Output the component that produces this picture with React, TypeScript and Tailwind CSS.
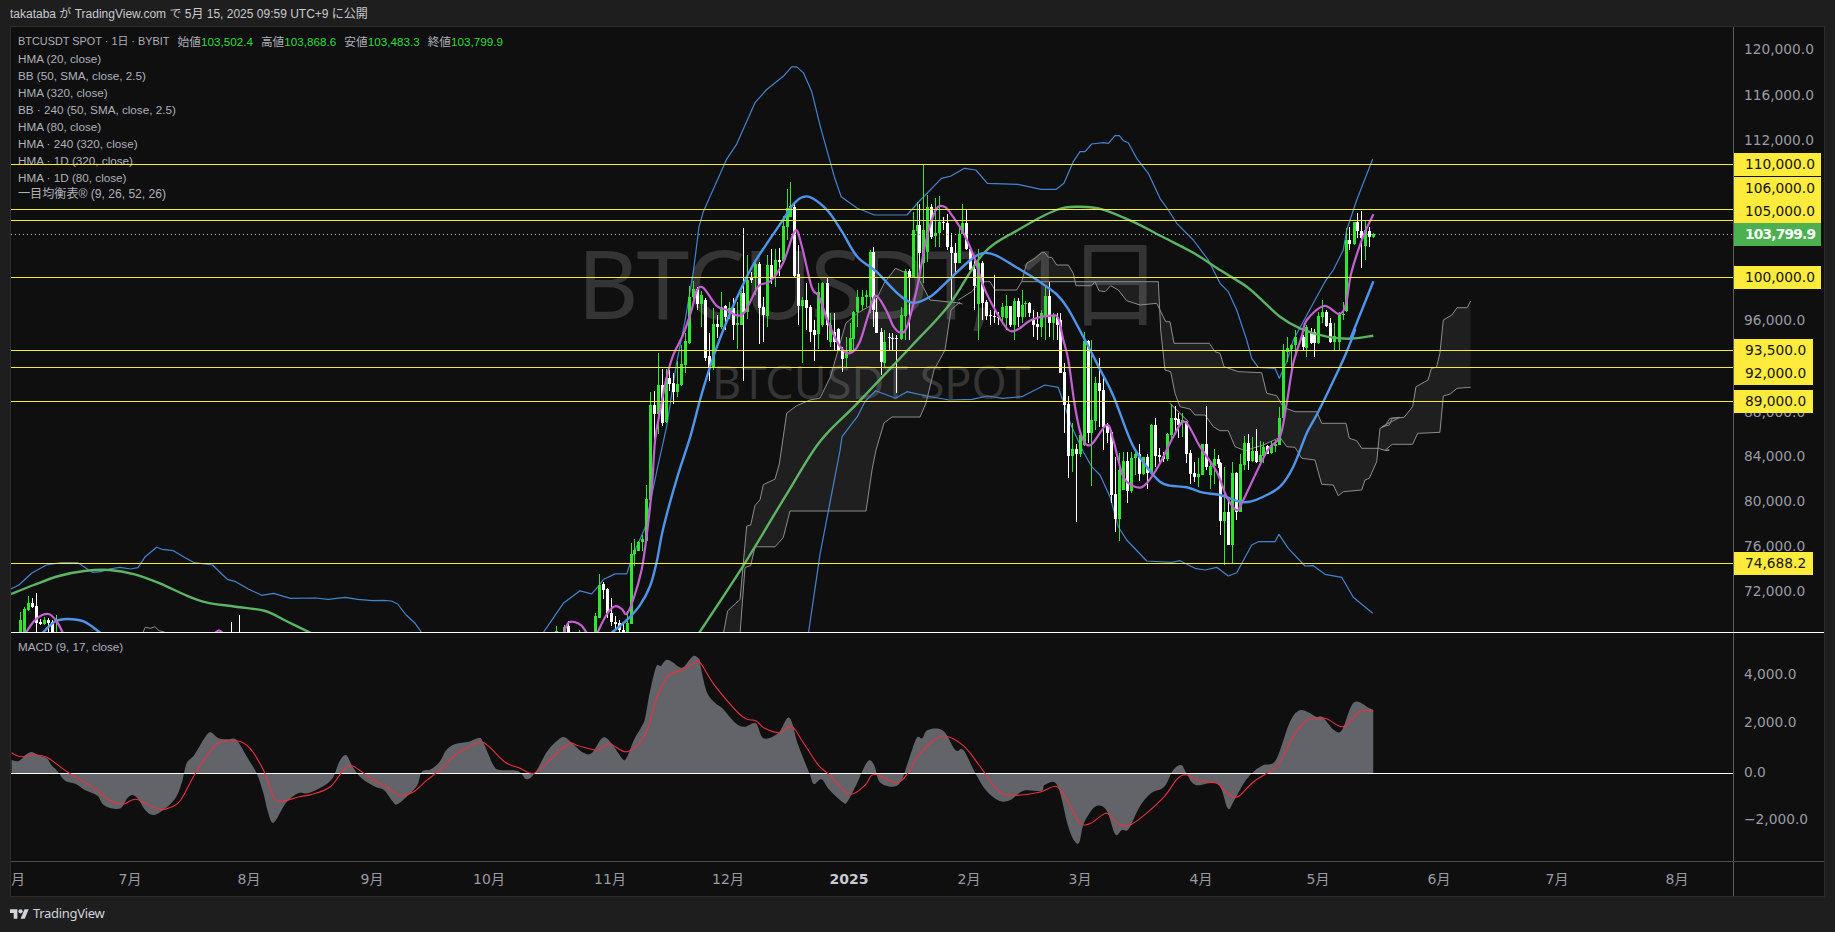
import React from 'react';

type Z = [number, number, number, number];
const Z2: Z = [1300, 2.93, 120, 3];
const Z3: Z = [1300, 2.93, 430, 3];
const Z5: Z = [620, 2.613, 150, 3];
const Z6: Z = [1000, 3, 330, 3];
const Z7: Z = [0, 2.376, 520, 3];
const Z8: Z = [0, 2.24, 630, 3];
const Z9: Z = [700, 2.24, 630, 3];
const Z10: Z = [500, 3, 50, 2.657];
const Z11: Z = [900, 3, 110, 3];

type P = [number, number];
const pts = (z: Z, a: number[]): P[] => {
  const out: P[] = [];
  for (let i = 0; i < a.length; i += 2) out.push([z[0] + a[i] / z[1], z[2] + a[i + 1] / z[3]]);
  return out;
};
const poly = (p: P[]) => p.map((q) => q[0].toFixed(1) + ',' + q[1].toFixed(1)).join(' ');
const smooth = (p: P[]) => {
  let d = `M${p[0][0].toFixed(1)} ${p[0][1].toFixed(1)}`;
  for (let i = 0; i < p.length - 1; i++) {
    const a = p[Math.max(0, i - 1)], b = p[i], c = p[i + 1], e = p[Math.min(p.length - 1, i + 2)];
    const c1x = b[0] + (c[0] - a[0]) / 6, c1y = b[1] + (c[1] - a[1]) / 6;
    const c2x = c[0] - (e[0] - b[0]) / 6, c2y = c[1] - (e[1] - b[1]) / 6;
    d += `C${c1x.toFixed(1)} ${c1y.toFixed(1)} ${c2x.toFixed(1)} ${c2y.toFixed(1)} ${c[0].toFixed(1)} ${c[1].toFixed(1)}`;
  }
  return d;
};

// Bollinger bands
const bandUpperLeft = pts(Z7, [26,207,45,195,75,160,110,135,145,128,185,128,205,145,220,157,240,155,260,147,285,142,310,147,328,143,345,110,372,82,385,88,412,92,440,113,462,128,505,135,525,160,540,178,560,185,590,207,622,226,650,220,690,235,750,234,780,238,820,232,850,238,885,242,910,241,930,243,945,252,965,285,985,308,1003,340]);
const bandUpper = [
  ...pts(Z10, [127,1552,190,1470,240,1437,275,1445,298,1422,310,1407,345,1392,380,1392,400,1340,435,1270,470,1120,500,1000,530,830,555,720,580,590,597,470,610,430,680,290,710,250,765,140,800,105,850,70,875,45,890,45,910,60,935,110,960,200]),
  ...pts(Z5, [560,80,578,140,620,175,665,195,750,195,785,150,840,85,865,78,900,55,930,60,960,100,1040,103,1100,118,1140,118,1160,100]),
  ...pts(Z11, [520,155,540,125,555,125,575,102,610,98,625,100,645,77,658,77,670,92,685,98,710,145,745,190,780,265,805,300,830,340,880,390,925,450,960,520,985,545,1010,600,1040,690]),
  ...pts(Z6, [755,85,775,112,825,115,838,145,860,95]),
  ...pts(Z11, [1180,690,1245,570,1275,515,1300,480,1330,420,1340,360,1370,270,1418,147]),
];
const bandLower = [
  ...pts(Z10, [925,1552,960,1340]),
  ...pts(Z5, [575,900,580,860,620,800,640,755,668,722,720,745,750,725,800,738,860,750,920,748,960,738,1000,745,1050,740,1110,705,1145,712]),
  ...pts(Z6, [190,215,215,290,250,365,275,410,300,435,330,500,355,590,380,630,440,693,515,697,540,692,585,715,615,720,650,712,685,738,710,728,755,645,775,635,825,635,837,613,865,655,915,708,940,707,975,733,1025,742,1060,802,1118,850]),
];
// HMA lines
const blueLeft = pts(Z7, [100,340,130,305,160,297,200,305,240,340]);
const blue = [
  ...pts(Z10, [330,1552,380,1515,420,1475,450,1425,470,1360,490,1270,530,1140,570,1030,600,930,620,870,650,790,690,700,720,640,760,570,800,515,850,450,880,410,910,390,940,395]),
  ...pts(Z5, [545,185,580,245,620,320,670,365,725,430,765,458,810,440,850,400,910,335,945,310,980,315,1040,355,1090,390,1140,432,1170,475,1215,570,1255,660,1290,740]),
  ...pts(Z6, [395,340,440,410,480,455,510,467,560,472,610,488,660,495,720,515,750,515,790,500,840,470,880,410,920,310,955,245,1020,110,1040,65,1065,0]),
  ...pts(Z2, [150,650,215,484]),
];
const magSmall1 = pts(Z7, [60,340,85,298,115,282,135,305,150,340]);
const magSmall2 = pts(Z7, [510,340,520,331,530,340]);
const magSmall3 = pts(Z10, [190,1552,205,1522,225,1520,245,1530,262,1552]);
const magenta = [
  ...pts(Z10, [290,1552,320,1500,345,1478,365,1485,380,1498,400,1460,425,1380,440,1290,455,1170,465,1040,480,960,500,870,520,810,550,755,575,690,590,640,610,632,650,680,680,690,710,705,735,695,775,628,810,615,850,565,885,480,905,520,935,630]),
  ...pts(Z5, [520,440,545,520,575,590,600,610,625,580,650,490,668,437,695,480,715,530,733,548,750,530,775,420,800,270,825,180,848,170,870,200,900,255,925,320,950,410,985,490,1015,540,1040,538,1075,510,1125,497,1145,505]),
  ...pts(Z6, [190,30,205,90,225,230,245,320,272,345,320,285,340,330,370,440,410,472,440,460,480,400,520,320,555,275,600,350,650,425,680,500,710,540,730,510,800,365,840,320,860,220,880,100,905,20]),
  ...pts(Z2, [20,600,70,558,115,582,135,550,150,460,185,350,215,283]),
];
const greenLeft = pts(Z7, [26,222,80,195,140,168,200,153,260,150,320,163,380,190,440,225,490,247,560,260,630,273,680,303,740,340]);
const green = [
  ...pts(Z10, [595,1552,730,1370,860,1180,960,1040]),
  ...pts(Z5, [620,760,760,590,860,465,950,310,1040,240,1140,180,1200,170,1260,178,1340,215,1420,262,1500,310,1568,360]),
  ...pts(Z11, [1040,530,1080,565,1140,620,1200,655,1280,680,1350,686,1420,677]),
];
// Ichimoku cloud
const c1Up = [
  ...pts(Z10, [670,1552,683,1490,720,1460,740,1265,752,1262,765,1210,780,1195,790,1155,825,1140,838,1100,860,965,890,945,930,930,960,925]),
  ...pts(Z5, [550,680,590,520,620,490,665,460,690,400,720,355,780,385,810,450,880,458,895,462]),
];
const c1Lo: P[] = [
  ...pts(Z10, [720,1552,735,1375,752,1370,765,1320,825,1320,850,1295,870,1225,960,1225]),
  [866, 511], [872, 470], [876, 450], [884, 423], [892, 417], [920, 417], [926, 403], [934, 370], [945, 350], [951, 310], [960, 302],
];
const c1Tail = pts(Z11, [175,570,215,545,240,515,270,515,285,540,350,540,365,515]);
const cP = [
  ...pts(Z11, [365,515,775,515]),
  ...pts(Z6, [482,0,495,120,512,125,525,190,540,230,570,237,585,255,615,255,640,290,660,302,685,302,705,350,735,362,790,345,840,322,860,350,885,352,905,385,945,390,965,463,1000,465,1015,497,1030,485,1085,480,1095,450,1108,445,1130,395,1140,295,1155,288,1170,265,1200,262]),
  ...pts(Z2, [240,920,262,915,270,895,305,892,330,860,340,800,375,780,385,745,400,742,410,700,420,600,445,585,460,563,490,563,500,543]),
];
const cQ = [
  ...pts(Z11, [365,515,380,460,405,445,425,428,435,428,445,442,455,442,470,465,505,465,520,490,528,527,575,527,585,515,597,542,615,545,632,527,655,540,680,572,720,585,770,580,780,600,797,635,810,635]),
  ...pts(Z6, [522,40,628,40,645,65,660,70,672,110,715,125,785,128,800,190,830,197,850,232,885,245,950,245,965,280,1038,280,1048,325,1070,332,1085,355,1135,355,1158,362,1168,360]),
  ...pts(Z3, [250,60,270,43,330,43,345,10]),
  ...pts(Z2, [350,940,410,937,420,828,440,822,460,805,500,802]),
];
const trend = pts(Z6, [510,220,565,275]);
const stub = pts(Z7, [340,337,345,322,358,325,368,320,378,332,392,337]);

type C = [number, number, number, number, number, number];
const cands: { z: Z; d: C[] }[] = [
  { z: Z7, d: [[1,48,300,340,275,340],[1,57,268,340,262,340],[1,67,250,270,228,272],[0,77,250,262,235,265],[0,86,258,310,220,340],[0,96,306,312,298,316],[1,105,300,312,292,316],[0,115,300,310,295,340],[0,123,305,340,300,340],[1,132,335,340,285,340],[0,550,336,340,305,340],[0,569,336,340,285,340]] },
  { z: Z10, d: [
    [1,169,1545,1552,1530,1552],[1,192,1532,1552,1528,1552],[0,205,1530,1552,1518,1552],[1,238,1546,1552,1540,1552],
    [1,286,1505,1552,1495,1552],[1,298,1422,1508,1393,1510],[0,310,1420,1435,1413,1460],[0,322,1433,1495,1430,1510],[0,334,1495,1520,1455,1530],[0,344,1520,1525,1505,1540],[0,356,1522,1540,1515,1552],[0,368,1540,1552,1525,1552],[1,380,1522,1552,1490,1552],[1,392,1338,1525,1310,1525],[1,403,1328,1340,1298,1370],[1,415,1308,1330,1305,1332],[1,427,1300,1308,1288,1330],[1,439,1193,1305,1157,1310],[1,451,943,1195,910,1195],[0,463,943,967,905,1050],[1,473,890,967,805,1020],[0,485,890,990,848,1000],[1,497,872,988,848,990],[0,508,872,888,850,905],[0,520,885,908,858,940],[1,532,888,908,825,922],[1,544,835,890,785,893],[1,556,772,837,752,858],[1,568,655,778,628,782],[1,580,635,655,615,665],[0,592,635,675,630,690],[1,602,650,675,640,735],[0,614,665,818,660,825],[0,626,812,845,752,880],[1,638,728,845,685,850],[0,650,728,735,703,765],[1,662,682,735,643,740],[0,674,680,710,678,745],[1,686,685,700,670,715],[0,698,685,730,658,770],[1,710,725,730,670,795],[1,722,646,730,640,730],[0,730,646,695,473,880],[1,742,612,697,545,715],[0,754,605,612,590,620],[1,766,568,605,562,650],[0,778,568,685,563,780],[0,790,683,705,655,775],[1,802,570,707,545,735],[0,814,570,608,530,622],[1,826,558,600,530,630],[0,838,558,562,525,600],[1,850,468,560,440,565],[1,862,420,470,368,505],[1,871,415,445,352,445],[0,883,418,600,408,605],[0,895,595,680,518,730],[1,907,665,680,655,832],[0,919,665,685,618,745],[0,931,682,748,678,775],[0,943,745,757,718,825],[1,955,643,755,618,795]] },
  { z: Z5, d: [[1,529,398,525,395,530],[0,540,398,525,385,570],[1,550,525,575,490,590],[0,560,545,575,490,600],[0,570,538,600,535,600],[0,580,600,628,590,665],[1,590,600,625,560,650],[1,600,565,605,520,610],[1,610,485,568,482,600],[1,620,440,485,420,530],[1,632,440,465,420,480],[1,642,435,440,420,470],[1,652,305,440,300,490],[0,662,305,480,290,530],[0,670,485,548,445,548],[0,681,545,635,535,675],[1,691,575,640,540,650],[0,702,560,565,550,600],[0,712,563,566,550,600],[0,722,565,568,555,730],[1,733,495,568,470,570]] },
  { z: Z11, d: [[1,14,483,617,478,690],[0,26,483,500,478,690],[1,38,360,500,305,500],[1,50,345,362,275,500],[0,58,345,430,282,510],[1,70,360,460,165,520],[1,82,292,425,255,455],[0,94,292,380,282,388],[1,106,368,378,265,410],[1,118,335,368,258,410],[0,130,335,338,320,360],[0,142,340,412,312,420],[0,154,412,430,370,570],[0,166,430,458,400,490],[1,178,372,458,345,460],[1,187,340,372,282,372],[0,199,340,418,300,420],[0,211,418,480,410,490],[0,223,478,528,450,600],[1,235,460,582,418,690],[0,247,458,580,452,630],[0,259,575,618,570,630],[0,271,615,617,600,645],[0,283,618,620,495,640],[0,295,620,622,605,645],[1,307,590,620,580,640],[1,317,588,625,555,660],[0,329,588,645,590,650],[1,341,572,645,565,690],[0,353,572,620,565,650],[1,365,585,620,540,640],[1,376,580,583,572,620],[0,388,580,608,575,620],[0,400,630,645,600,680],[0,412,642,650,605,690],[1,424,610,650,600,680],[1,436,558,622,530,690],[0,446,558,638,515,680],[1,458,617,640,610,690],[0,470,620,645,610,690]] },
  { z: Z6, d: [[0,181,-30,130,-50,130],[0,193,125,225,100,310],[0,205,222,378,198,445],[1,217,357,378,280,425],[0,229,357,372,342,575],[1,241,315,372,310,380],[1,253,33,345,5,348],[0,265,32,310,30,340],[1,274,270,308,30,468],[1,286,158,272,140,300],[0,298,158,183,85,290],[0,310,180,292,135,360],[0,322,285,308,280,340],[0,334,305,495,300,520],[0,346,492,567,380,605],[1,358,420,567,370,632],[1,370,393,480,365,480],[0,382,393,483,365,518],[1,394,385,483,365,490],[1,404,372,385,358,435],[0,416,372,432,342,452],[1,428,380,432,380,435],[0,440,380,428,372,478],[1,452,285,428,282,430],[0,464,285,378,265,410],[0,476,375,382,355,395],[0,488,378,388,365,395],[1,500,312,388,308,392],[1,512,265,315,222,330],[0,524,265,270,228,305],[0,534,268,285,250,325],[1,546,270,275,250,320],[0,557,275,372,272,400],[0,569,368,432,360,462],[0,581,428,440,395,455],[1,593,432,440,385,472],[1,605,342,435,342,435],[0,617,342,410,228,420],[1,629,408,435,395,478],[1,641,388,408,358,462],[0,653,388,402,375,415],[0,661,400,572,395,615],[1,673,547,572,410,705],[0,685,545,645,510,645],[1,697,430,645,397,700],[0,709,428,545,425,570],[1,721,402,545,372,545],[1,733,340,405,318,420],[0,745,340,392,312,420],[1,757,362,392,322,395],[0,769,362,395,298,398],[1,781,375,395,332,398],[1,790,350,377,335,400],[0,802,348,372,345,372],[1,814,345,368,332,372],[1,826,342,347,330,365],[1,838,265,345,232,345],[1,850,62,265,42,265],[1,862,55,65,20,95],[1,874,45,57,42,122],[1,886,20,45,0,80]] },
  { z: Z2, d: [[0,10,650,682,645,690],[1,19,620,683,615,712],[0,31,640,668,625,672],[0,42,635,668,628,710],[1,54,588,670,575,672],[1,65,575,592,540,610],[0,77,575,618,570,620],[0,89,608,667,595,670],[1,101,648,665,610,690],[1,113,583,665,575,690],[1,125,582,585,545,600],[1,136,360,572,325,575],[0,145,360,372,320,390],[1,157,305,372,305,375],[0,168,305,332,280,355],[0,180,332,355,272,443],[1,191,330,378,302,420],[0,203,332,352,320,380],[1,215,342,352,340,354]] },
];

const macdTop = [
  ...pts(Z8, [26,390,42,393,60,372,72,366,85,375,105,385,115,405,130,425,140,445,150,455,170,462,190,480,218,497,230,522,245,533,270,535,285,505,297,495,310,508,325,540,345,555,375,530,395,500,408,455,418,400,435,375,460,320,472,307,490,325,510,328,530,330,555,385,575,430,590,490,600,545,613,578,640,520,668,490,690,490,720,472,745,445,760,395,775,375,790,410,810,445,840,470,860,480,880,515,890,523,915,495,935,465,945,425,965,418,985,395,1000,360,1020,342,1050,335,1072,324,1082,335,1105,405,1120,420,1160,423,1180,448,1200,425,1225,365,1250,330,1265,322,1290,350,1305,367,1325,370,1350,323,1370,340,1393,385,1403,385,1420,330,1435,295,1445,265,1455,190,1470,110,1480,108,1492,90,1505,95,1520,110,1532,110,1553,78,1568,90]),
  ...pts(Z9, [0,100,15,185,35,220,50,235,80,280,100,290,125,280,142,325,175,310,200,263,220,345,245,430,255,462,272,448,290,480,320,517,330,515,350,465,375,395,390,405,402,455,430,470,450,455,465,400,485,325,498,325,510,300,545,302,572,360,590,360,615,425,640,480,670,512,695,510,725,482,765,483,772,465,800,465,825,590,840,635,850,635,860,580,885,530,910,540,930,613,945,600,960,597,985,530,1010,490,1040,470,1060,420,1078,405,1090,430,1110,465,1160,462,1182,535,1195,515,1218,460,1240,425,1262,405,1290,390,1320,280,1340,243,1360,245,1380,260,1395,262,1420,300,1438,300,1465,217,1500,235,1508,240]),
];
const macdLine = [
  ...pts(Z8, [26,368,45,380,75,375,105,382,150,425,215,478,245,510,275,523,305,508,355,538,385,530,405,510,440,425,485,343,530,332,560,355,590,420,615,505,635,513,670,500,700,493,740,470,770,420,790,408,830,445,865,470,895,497,925,487,955,452,985,420,1020,375,1045,355,1082,337,1130,395,1165,415,1185,428,1205,423,1270,345,1295,347,1335,360,1365,342,1405,365,1445,315,1470,210,1495,140,1530,118,1555,100]),
  ...pts(Z9, [0,97,35,170,95,260,125,272,145,295,180,308,205,288,230,335,265,405,290,435,335,492,370,465,390,433,440,458,465,430,490,375,520,335,548,318,590,347,625,405,665,478,695,496,760,487,800,470,830,530,852,580,875,580,910,550,935,580,960,587,1000,550,1040,500,1070,445,1090,435,1120,453,1158,460,1180,490,1205,500,1240,455,1295,405,1320,340,1355,275,1400,265,1440,290,1480,243,1508,243]),
];

const legendRows = ['HMA (20, close)','BB (50, SMA, close, 2.5)','HMA (320, close)','BB · 240 (50, SMA, close, 2.5)','HMA (80, close)','HMA · 240 (320, close)','HMA · 1D (320, close)','HMA · 1D (80, close)'];
const ohlc: [string, string][] = [['始値','103,502.4'],['高値','103,868.6'],['安値','103,483.3'],['終値','103,799.9']];
const yellowLines = [164, 209, 220, 277, 350, 367, 401, 563];
const priceTicks: [string, number][] = [['120,000.0',49],['116,000.0',95],['112,000.0',140],['96,000.0',320],['88,000.0',412],['84,000.0',456],['80,000.0',501],['76,000.0',546],['72,000.0',591]];
const priceTags: [string, number, number][] = [['110,000.0',153,87],['106,000.0',177,87],['105,000.0',200,87],['100,000.0',266,87],['93,500.0',339,79],['92,000.0',362,79],['89,000.0',390,79],['74,688.2',552,79]];
const macdTicks: [string, number][] = [['4,000.0',674],['2,000.0',722],['0.0',772],['−2,000.0',819]];
const months: [string, number, boolean][] = [['7月',130,false],['8月',249,false],['9月',372,false],['10月',489,false],['11月',610,false],['12月',728,false],['2025',849,true],['2月',969,false],['3月',1080,false],['4月',1201,false],['5月',1318,false],['6月',1439,false],['7月',1557,false],['8月',1677,false]];

const Candle = ({ z, c }: { z: Z; c: C }) => {
  const x = Math.round(z[0] + c[1] / z[1]);
  const y = (v: number) => z[2] + v / z[3];
  const fill = c[0] ? '#2ee62e' : '#ffffff';
  const bt = y(c[2]), bb = Math.max(y(c[3]), y(c[2]) + 1);
  return (
    <g fill={fill} shapeRendering="crispEdges">
      <rect x={x} y={y(c[4])} width={1} height={Math.max(0, y(c[5]) - y(c[4]))} />
      <rect x={x - 1} y={bt} width={3} height={bb - bt} />
    </g>
  );
};

export default function App() {
  return (
    <div className="w-[1835px] h-[932px] overflow-hidden flex flex-col bg-[#1e1e1e] [font-family:'DejaVu_Sans','Noto_Sans_CJK_JP',sans-serif]">
      <header className="h-[26px] pt-[2px] pl-[10px] flex items-center text-[12px] text-[#c8cad0] whitespace-nowrap [font-family:'Liberation_Sans','Noto_Sans_CJK_JP',sans-serif]">
        takataba が TradingView.com で 5月 15, 2025 09:59 UTC+9 に公開
      </header>
      <main className="mx-[10px] h-[871px] border border-[#2c2c2c] bg-[#0f0f0f] flex flex-col">
        <section className="h-[605px] flex">
          <div className="relative w-[1722px] overflow-hidden">
            <div className="absolute left-[566px] top-[209px] text-[95px] leading-[92px] tracking-[-2.2px] text-[#343434] whitespace-nowrap [font-family:'Noto_Sans','Noto_Sans_CJK_JP',sans-serif]">BTCUSDT, 1日</div>
            <div className="absolute left-[701px] top-[331px] text-[45px] leading-[48px] text-[#343434] whitespace-nowrap [font-family:'Noto_Sans',sans-serif]">BTCUSDT SPOT</div>
            <div className="absolute left-[7px] top-[6px] flex flex-col text-[11.7px] leading-[17px] text-[#adb0b8] whitespace-nowrap [font-family:'Liberation_Sans','Noto_Sans_CJK_JP',sans-serif]">
              <div className="flex gap-[8px]">
                <span className="text-[10.9px]">BTCUSDT SPOT · 1日 · BYBIT</span>
                {ohlc.map(([k, v]) => (
                  <span key={k}>{k}<span className="text-[#26dd3a]">{v}</span></span>
                ))}
              </div>
              {legendRows.map((r) => <div key={r}>{r}</div>)}
              <div className="text-[12.1px]">一目均衡表® (9, 26, 52, 26)</div>
            </div>
            <svg className="absolute inset-0" width="1722" height="605" viewBox="11 27 1722 605" fill="none">
              <polygon points={poly([...c1Up, ...[...c1Lo].reverse()])} fill="#ffffff" fillOpacity="0.07" />
              <polygon points={poly([...cP, ...[...cQ].reverse()])} fill="#ffffff" fillOpacity="0.07" />
              {[c1Up, c1Lo, c1Tail, cP, cQ, stub].map((l, i) => (
                <polyline key={i} points={poly(l)} stroke="#8c8c8c" strokeWidth="1" strokeLinejoin="round" />
              ))}
              <polyline points={poly(trend)} stroke="#b4b4b4" strokeWidth="1" />
              {[bandUpperLeft, bandUpper, bandLower].map((l, i) => (
                <polyline key={i} points={poly(l)} stroke="#4484cf" strokeWidth="1.2" strokeLinejoin="round" />
              ))}
              {cands.flatMap((g, i) => g.d.map((c, j) => <Candle key={i + '-' + j} z={g.z} c={c} />))}
              {[greenLeft, green].map((l, i) => (
                <path key={i} d={smooth(l)} stroke="#5cb565" strokeWidth="2.4" />
              ))}
              {[blueLeft, blue].map((l, i) => (
                <path key={i} d={smooth(l)} stroke="#4e95ec" strokeWidth="2.4" />
              ))}
              {[magSmall1, magSmall2, magSmall3, magenta].map((l, i) => (
                <path key={i} d={smooth(l)} stroke="#c460d2" strokeWidth="2.2" />
              ))}
              <line x1="11" x2="1733" y1="234.5" y2="234.5" stroke="#b8b8b8" strokeWidth="1" strokeDasharray="1 3" />
              {yellowLines.map((y) => (
                <line key={y} x1="11" x2="1733" y1={y + 0.5} y2={y + 0.5} stroke="#ffeb3b" strokeWidth="1" />
              ))}
            </svg>
          </div>
          <div className="relative flex-1 border-l border-[#5c5c5c] text-[13.75px] text-[#9a9ca3] whitespace-nowrap">
            {priceTicks.map(([t, y]) => (
              <span key={t} className="absolute left-[10px] leading-[20px] -translate-y-1/2" style={{ top: y - 27 }}>{t}</span>
            ))}
            {priceTags.map(([t, y, w]) => (
              <span key={t} className="absolute left-0 h-[23px] pl-[11px] flex items-center bg-[#ffeb3b] text-[#131313]" style={{ top: y - 27, width: w }}>{t}</span>
            ))}
            <span className="absolute left-0 top-[196px] h-[23px] w-[87px] pl-[11px] flex items-center bg-[#4caf50] text-white font-bold tracking-[-0.8px]">103,799.9</span>
          </div>
        </section>
        <div className="h-px bg-white shrink-0" />
        <section className="h-[228px] flex">
          <div className="relative w-[1722px] overflow-hidden">
            <div className="absolute left-[7px] top-[5px] text-[11.7px] leading-[17px] text-[#adb0b8] [font-family:'Liberation_Sans',sans-serif]">MACD (9, 17, close)</div>
            <svg className="absolute inset-0" width="1722" height="228" viewBox="11 633 1722 228" fill="none">
              <path d={smooth(macdTop) + 'L1373.2 773L11.6 773Z'} fill="#636469" />
              <line x1="11" x2="1733" y1="773.5" y2="773.5" stroke="#ffffff" strokeWidth="1" />
              <path d={smooth(macdLine)} stroke="#ee2f3f" strokeWidth="1.1" />
            </svg>
          </div>
          <div className="relative flex-1 border-l border-[#5c5c5c] text-[13.75px] text-[#9a9ca3] whitespace-nowrap">
            {macdTicks.map(([t, y]) => (
              <span key={t} className="absolute leading-[20px] -translate-y-1/2 left-[10px]" style={{ top: y - 633 }}>{t}</span>
            ))}
          </div>
        </section>
        <section className="h-[35px] flex border-t border-[#4d4d4d]">
          <div className="relative w-[1722px] overflow-hidden text-[14px] text-[#9a9ca3] whitespace-nowrap">
            <span className="absolute left-0 top-[7px] leading-[20px]">月</span>
            {months.map(([t, x, b]) => (
              <span key={t + x} className={'absolute top-[7px] leading-[20px] -translate-x-1/2 ' + (b ? 'font-bold text-[#c9cbd1]' : '')} style={{ left: x - 11 }}>{t}</span>
            ))}
          </div>
          <div className="flex-1 border-l border-[#5c5c5c]" />
        </section>
      </main>
      <footer className="flex-1 pl-[10px] pb-[2px] flex items-center gap-[4px]">
        <svg width="19" height="10" viewBox="0 4 36 18" fill="#d1d4dc" aria-hidden="true">
          <path d="M14 22H7V11H0V4h14v18zM28 22h-8l7.5-18h8L28 22z" />
          <circle cx="20" cy="8" r="4" />
        </svg>
        <span className="text-[13px] leading-none text-[#d1d4dc] tracking-[-0.3px] [font-family:'Noto_Sans',sans-serif]">TradingView</span>
      </footer>
    </div>
  );
}
